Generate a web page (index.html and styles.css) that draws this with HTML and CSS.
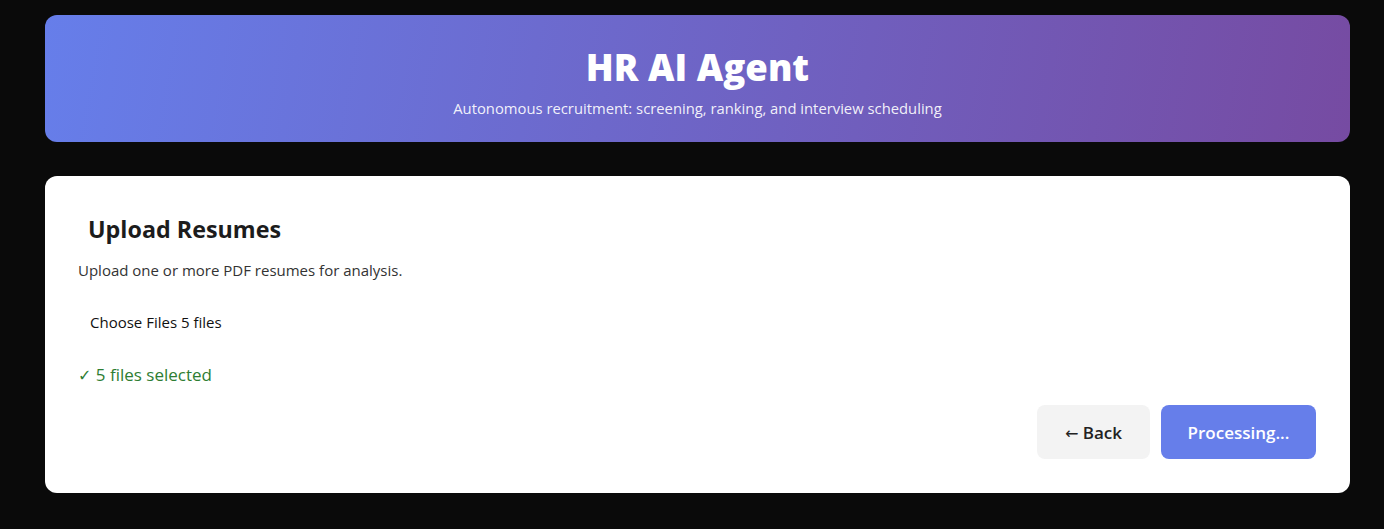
FILE: index.html
```html
<!DOCTYPE html>
<html lang="en">
<head>
<meta charset="utf-8">
<title>HR AI Agent</title>
<link rel="stylesheet" href="styles.css">
</head>
<body>
<div class="page">
  <header class="hero">
    <h1 class="hero-title">HR AI Agent</h1>
    <p class="hero-sub">Autonomous recruitment: screening, ranking, and interview scheduling</p>
  </header>
  <section class="card">
    <h2 class="card-title">Upload Resumes</h2>
    <p class="card-desc">Upload one or more PDF resumes for analysis.</p>
    <div class="file-row">Choose Files 5 files</div>
    <div class="status"><span class="check">✓</span> 5 files selected</div>
    <div class="actions">
      <button class="btn btn-back"><span class="arrow">←</span> Back</button>
      <button class="btn btn-primary">Processing...</button>
    </div>
  </section>
</div>
</body>
</html>
```

FILE: styles.css
```css
* { box-sizing: border-box; }
html, body { margin: 0; padding: 0; }
body {
  background: #0a0a0a;
  font-family: "Open Sans", "Noto Sans", sans-serif;
}
.page {
  padding: 15px 34px 0 45px;
  display: flex;
  flex-direction: column;
  gap: 34px;
}
.hero {
  background: linear-gradient(100deg, #667eea 0%, #764ba2 100%);
  border-radius: 12px;
  height: 127px;
  color: #fff;
  text-align: center;
  padding-top: 30px;
}
.hero-title {
  margin: 0;
  font-family: "Open Sans", sans-serif;
  font-weight: 800;
  font-size: 36.5px;
  line-height: 44px;
}
.hero-sub {
  margin: 9px 0 0;
  font-size: 14.8px;
  line-height: 20px;
  color: rgba(255,255,255,0.92);
}
.card {
  background: #fff;
  border-radius: 12px;
  padding: 34px 34px 34px 33px;
  display: flex;
  flex-direction: column;
}
.card-title {
  margin: 3px 0 0 10px;
  font-size: 23.3px;
  line-height: 32px;
  font-weight: 700;
  color: #1c1c1c;
}
.card-desc {
  margin: 15px 0 0;
  font-size: 15px;
  line-height: 20px;
  color: #333;
}
.file-row {
  margin: 32px 0 0 12px;
  font-size: 15px;
  line-height: 20px;
  color: #111;
}
.status {
  margin-top: 32px;
  font-size: 17px;
  line-height: 22px;
  color: #2e7d32;
}
.check {
  font-family: "DejaVu Sans", sans-serif;
  font-size: 16px;
}
.actions {
  display: flex;
  justify-content: flex-end;
  gap: 11px;
  margin-top: 18px;
}
.btn {
  border: none;
  border-radius: 8px;
  height: 54px;
  font-family: inherit;
  font-size: 17px;
  font-weight: 600;
  padding: 0;
}
.arrow {
  font-family: "DejaVu Sans", sans-serif;
  font-weight: 400;
  font-size: 16px;
}
.btn-back {
  background: #f3f3f3;
  color: #222;
  width: 113px;
}
.btn-primary {
  background: #667eea;
  color: #fff;
  width: 155px;
}
```
